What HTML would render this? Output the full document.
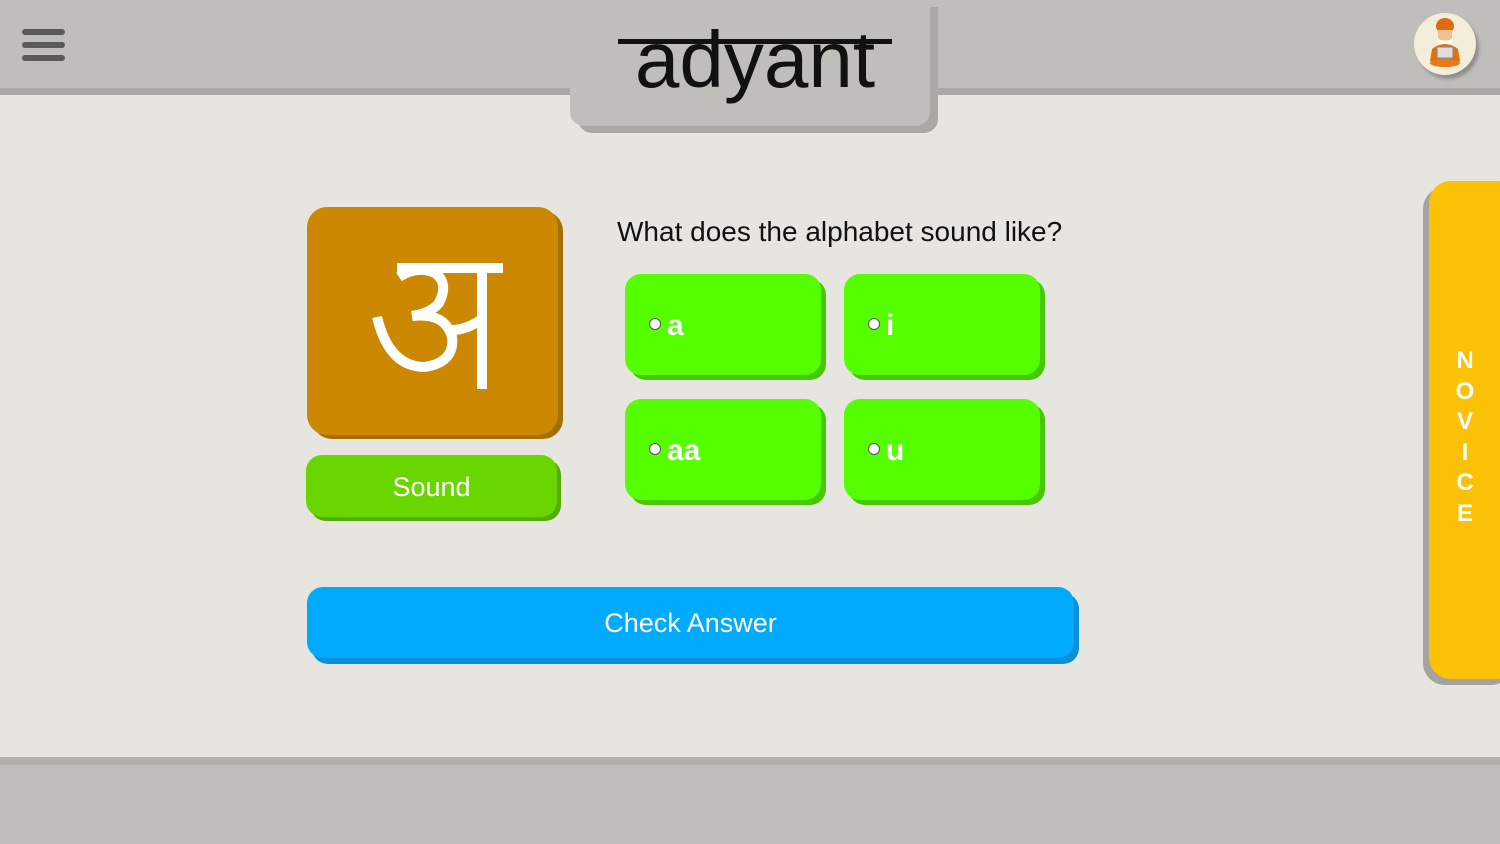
<!DOCTYPE html>
<html><head><meta charset="utf-8"><style>
*{margin:0;padding:0;box-sizing:border-box}
body{width:1500px;height:844px;overflow:hidden;background:#e6e5e0;position:relative;font-family:"Liberation Sans","DejaVu Sans",sans-serif}
.a{position:absolute}
.opt{position:absolute;width:196px;height:101px;background:#55ff00;border-radius:16px;box-shadow:5px 5px 0 #48c800;color:#fff;font-weight:bold;font-size:30px}
.opt .dot{position:absolute;left:24px;top:44px;width:12px;height:12px;border-radius:50%;background:#fff;border:1px solid #555}
.opt span{position:absolute;left:42px;top:35px}
</style></head><body>
<div class="a" style="left:0;top:0;width:1500px;height:88px;background:#bfbebb"></div>
<div class="a" style="left:0;top:88px;width:1500px;height:7px;background:#a9a8a5"></div>
<div class="a" style="left:0;top:757px;width:1500px;height:8px;background:#b0afac"></div>
<div class="a" style="left:0;top:765px;width:1500px;height:79px;background:#bfbebb"></div>
<div class="a" style="left:22px;top:29px;width:43px;height:6px;background:#5a5a5a;border-radius:3px"></div>
<div class="a" style="left:22px;top:42px;width:43px;height:6px;background:#5a5a5a;border-radius:3px"></div>
<div class="a" style="left:22px;top:55px;width:43px;height:6px;background:#5a5a5a;border-radius:3px"></div>
<div class="a" style="left:570px;top:0;width:360px;height:126px;background:#bfbebb;border-radius:0 0 14px 14px;box-shadow:8px 7px 0 #a9a8a5"></div>
<div class="a" style="left:618px;top:39px;width:274px;height:5px;background:#111"></div>
<div class="a" style="left:600px;top:20px;width:310px;text-align:center;font-family:'Liberation Sans',sans-serif;font-size:80px;line-height:80px;color:#111">adyant</div>
<div class="a" style="left:1414px;top:13px;width:62px;height:62px;border-radius:50%;background:#f4edd9;box-shadow:3px 4px 3px #8f8e8b"></div>
<svg class="a" style="left:1414px;top:13px" width="62" height="62">
<ellipse cx="31" cy="13" rx="9" ry="8" fill="#e06a10"/>
<rect x="24" y="17" width="14" height="10" fill="#f0c090"/>
<path d="M23 24 Q31 34 39 24 L38 30 Q31 36 24 30Z" fill="#fff"/>
<path d="M18 36 Q31 26 44 36 L46 48 Q31 54 16 48Z" fill="#e07010"/>
<rect x="23" y="34" width="16" height="11" rx="1" fill="#ddd" stroke="#888"/>
<ellipse cx="31" cy="50" rx="15" ry="4" fill="#e87a1a"/>
</svg>
<div class="a" style="left:307px;top:207px;width:251px;height:228px;background:#cc8800;border-radius:20px;box-shadow:5px 4px 0 #a56e00"></div>
<svg class="a" style="left:307px;top:207px" width="251" height="228">
<g fill="none" stroke="#fff" stroke-width="10">
<path d="M90 61 H196"/>
<path d="M175 61 V182"/>
<path d="M92 70 Q110 58 128 66 Q142 76 132 96 Q124 106 105 109"/>
<path d="M105 109 Q138 105 145 130 Q148 155 118 160 Q82 160 70 110"/>
<path d="M142 123 Q158 124 175 112"/>
</g></svg>
<div class="a" style="left:306px;top:455px;width:251px;height:62px;background:#6ad600;border-radius:16px;box-shadow:4px 4px 0 #55ad00;color:#fff;font-size:27px;text-align:center;line-height:64px">Sound</div>
<div class="a" style="left:617px;top:216px;font-size:28px;color:#111">What does the alphabet sound like?</div>
<div class="opt" style="left:625px;top:274px"><div class="dot"></div><span>a</span></div>
<div class="opt" style="left:844px;top:274px"><div class="dot"></div><span>i</span></div>
<div class="opt" style="left:625px;top:399px"><div class="dot"></div><span>aa</span></div>
<div class="opt" style="left:844px;top:399px"><div class="dot"></div><span>u</span></div>
<div class="a" style="left:307px;top:587px;width:767px;height:71px;background:#00aaff;border-radius:16px;box-shadow:5px 6px 0 #0b8fd6;color:#fff;font-size:27px;text-align:center;line-height:72px">Check Answer</div>
<div class="a" style="left:1429px;top:181px;width:90px;height:498px;background:#fbc107;border-radius:22px;box-shadow:-6px 6px 0 #a4a3a0"></div>
<div class="a" style="left:1450px;top:346px;width:30px;text-align:center;color:#fff;font-size:24px;line-height:30.5px;font-weight:bold">N<br>O<br>V<br>I<br>C<br>E</div>
</body></html>
